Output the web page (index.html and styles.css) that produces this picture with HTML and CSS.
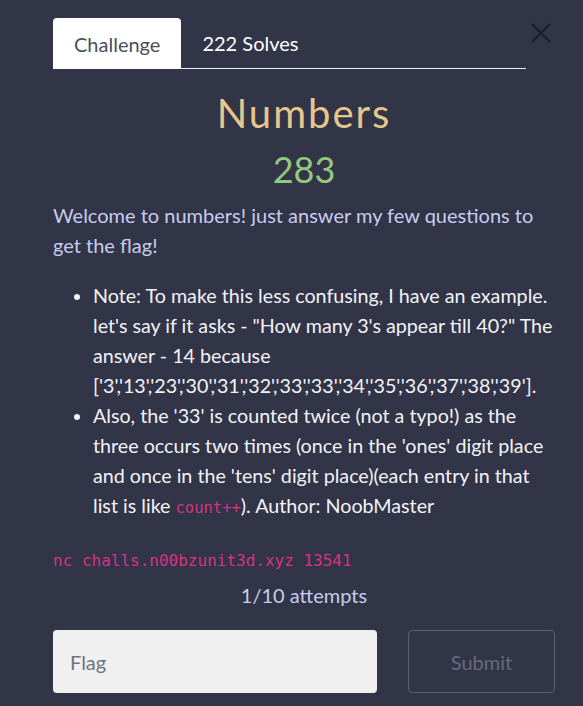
FILE: index.html
```html
<!DOCTYPE html>
<html lang="en">
<head>
<meta charset="utf-8">
<title>Numbers</title>
<link rel="stylesheet" href="styles.css">
</head>
<body>
<div class="modal">
  <button class="close" aria-label="Close">
    <svg width="20" height="20" viewBox="0 0 20 20"><path d="M1 1 L19 19 M19 1 L1 19" stroke="#1d1e28" stroke-width="2.2" fill="none"/></svg>
  </button>
  <nav class="tabs">
    <a class="tab active">Challenge</a>
    <a class="tab">222 Solves</a>
  </nav>
  <h1 class="title">Numbers</h1>
  <div class="points">283</div>
  <p class="desc">Welcome to numbers! just answer my few questions to get the flag!</p>
  <ul class="notes">
    <li>Note: To make this less confusing, I have an example. let's say if it asks - "How many 3's appear till 40?" The answer - 14 because ['3','13','23','30','31','32','33','33','34','35','36','37','38','39'].</li>
    <li>Also, the '33' is counted twice (not a typo!) as the three occurs two times (once in the 'ones' digit place and once in the 'tens' digit place)(each entry in that list is like <code class="inline">count++</code>). Author: NoobMaster</li>
  </ul>
  <div class="conn">nc challs.n00bzunit3d.xyz 13541</div>
  <div class="attempts">1/10 attempts</div>
  <form class="submit-row">
    <input class="flag" type="text" placeholder="Flag">
    <button class="submit" type="button">Submit</button>
  </form>
</div>
</body>
</html>
```

FILE: styles.css
```css
html, body {
  margin: 0;
  padding: 0;
  background: #323447;
  font-family: Lato, "Open Sans", sans-serif;
}
.modal {
  position: relative;
  padding: 18px 28px 0 53px;
  width: 502px;
}
.close {
  position: absolute;
  left: 531px;
  top: 23px;
  width: 20px;
  height: 20px;
  padding: 0;
  border: 0;
  background: none;
  line-height: 0;
}
.tabs {
  display: flex;
  width: 473px;
  height: 51px;
  border-bottom: 1px solid #e9ecf2;
  box-sizing: border-box;
}
.tab {
  display: flex;
  align-items: center;
  padding: 0 21px;
  font-size: 20px;
  color: #ffffff;
  border-radius: 4px 4px 0 0;
}
.tab.active {
  background: #ffffff;
  color: #495057;
  margin-bottom: -1px;
}
.title {
  margin: 20px 0 0;
  text-align: center;
  font-weight: 400;
  font-size: 40px;
  line-height: 48px;
  letter-spacing: 2px;
  color: #e5c68b;
}
.points {
  margin-top: 11px;
  text-align: center;
  font-size: 36px;
  line-height: 43px;
  color: #93c97d;
}
.desc {
  margin: 9px 0 21px;
  font-size: 20px;
  line-height: 30px;
  color: #c6cdee;
}
.notes {
  margin: 0;
  padding-left: 40px;
  font-size: 19.7px;
  line-height: 30px;
  color: #f2f3f8;
}
.inline {
  font-family: "DejaVu Sans Mono", "Liberation Mono", monospace;
  font-size: 15.5px;
  line-height: 1;
  color: #d63384;
}
.conn {
  margin-top: 28px;
  font-family: "DejaVu Sans Mono", "Liberation Mono", monospace;
  font-size: 16px;
  line-height: 24px;
  color: #d63384;
}
.attempts {
  margin-top: 7px;
  text-align: center;
  font-size: 20px;
  line-height: 30px;
  color: #c6cdee;
}
.submit-row {
  display: flex;
  gap: 31px;
  margin: 20px 0 0;
}
.flag {
  width: 324px;
  height: 63px;
  box-sizing: border-box;
  border: 0;
  border-radius: 4px;
  background: #f0f0f0;
  padding: 0 17px;
  font-family: Lato, sans-serif;
  font-size: 20px;
  color: #495057;
}
.flag::placeholder {
  color: #6c757d;
}
.submit {
  width: 147px;
  height: 63px;
  box-sizing: border-box;
  border: 1px solid #5d6072;
  border-radius: 4px;
  background: transparent;
  font-family: Lato, sans-serif;
  font-size: 20px;
  color: #676b7c;
}
```
